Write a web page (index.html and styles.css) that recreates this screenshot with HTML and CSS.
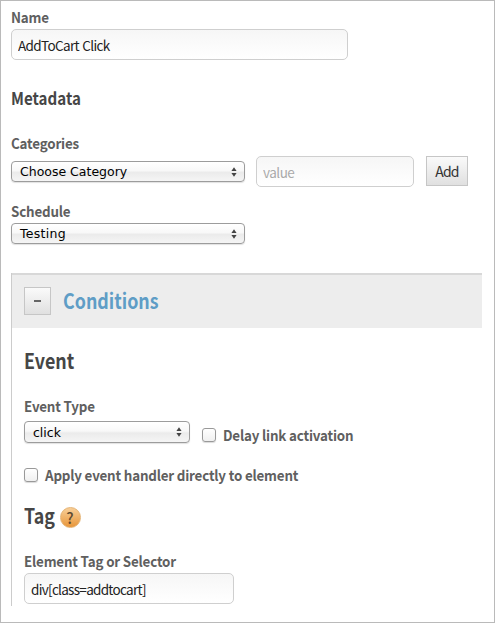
FILE: index.html
```html
<!DOCTYPE html>
<html lang="en">
<head>
<meta charset="utf-8">
<title>AddToCart Click</title>
<link rel="stylesheet" href="styles.css">
</head>
<body>
<form class="page">
  <label class="label name-label" for="name"><span>Name</span></label>
  <input class="text-input name-input" id="name" value="AddToCart Click">
  <h3 class="subheading"><span>Metadata</span></h3>
  <div class="label"><span>Categories</span></div>
  <div class="category-row">
    <div class="select wide"><span>Choose Category</span><svg class="arrows" viewBox="0 0 6 10"><path d="M3 0.2 5.6 4H.4zM3 9.8 5.6 6H.4z"/></svg></div>
    <input class="text-input value-input" placeholder="value">
    <button class="button add" type="button">Add</button>
  </div>
  <div class="label schedule-label"><span>Schedule</span></div>
  <div class="select wide"><span class="testing">Testing</span><svg class="arrows" viewBox="0 0 6 10"><path d="M3 0.2 5.6 4H.4zM3 9.8 5.6 6H.4z"/></svg></div>
  <section class="panel">
    <header class="panel-header">
      <button class="button toggle" type="button" aria-label="Collapse"><i class="minus"></i></button>
      <h2 class="panel-title"><span>Conditions</span></h2>
    </header>
    <div class="panel-body">
      <h2 class="heading"><span>Event</span></h2>
      <div class="label event-type"><span>Event Type</span></div>
      <div class="event-row">
        <div class="select narrow"><span>click</span><svg class="arrows" viewBox="0 0 6 10"><path d="M3 0.2 5.6 4H.4zM3 9.8 5.6 6H.4z"/></svg></div>
        <label class="check delay"><input type="checkbox"><span>Delay link activation</span></label>
      </div>
      <label class="check apply"><input type="checkbox"><span>Apply event handler directly to element</span></label>
      <div class="tag-row">
        <h2 class="heading"><span>Tag</span></h2>
        <span class="help">?</span>
      </div>
      <label class="label selector-label" for="selector"><span>Element Tag or Selector</span></label>
      <input class="text-input selector-input" id="selector" value="div[class=addtocart]">
    </div>
  </section>
</form>
</body>
</html>
```

FILE: styles.css
```css
* { box-sizing: border-box; }
body { margin: 0; background: #fff; }
.page {
  width: 495px;
  height: 623px;
  border: 1px solid #bababa;
  padding: 5px 12px 0 10px;
  font-family: "Noto Sans CJK SC", "Noto Sans", sans-serif;
  color: #606060;
}
h2, h3 { margin: 0; font-weight: 700; color: #464646; }
.label, .check {
  display: block;
  height: 20px;
  font-size: 14.5px;
  line-height: 20px;
  font-weight: 700;
  white-space: nowrap;
  letter-spacing: -0.2px;
}
.label span, .check span {
  display: inline-block;
  transform: translateY(.5px) scaleX(.922);
  transform-origin: left;
}
.check span { transform: translateY(-.5px) scaleX(.922); }
.text-input {
  display: block;
  height: 31px;
  margin: 0;
  padding: 0 6px;
  border: 1px solid #cfcfcf;
  border-radius: 5px;
  background: linear-gradient(#f6f6f6, #fff);
  font: 13.5px "Noto Sans CJK SC", "Noto Sans", sans-serif;
  letter-spacing: -0.65px;
  word-spacing: 1px;
  color: #222;
  outline: 0;
}
.text-input::placeholder { color: #aaa; opacity: 1; }
.name-input { width: 337px; margin-top: 3px; }
.subheading { height: 24px; margin: 26px 0 22px; font-size: 17px; line-height: 24px; }
.subheading span { display: inline-block; transform: scaleX(.89); transform-origin: left; }
.category-row { display: flex; align-items: flex-start; height: 31px; margin-top: 4px; }
.category-row .select { margin-top: 5px; }
.value-input { width: 158px; margin-left: 11px; letter-spacing: -0.5px; }
.select {
  display: flex;
  align-items: center;
  justify-content: space-between;
  height: 21px;
  padding: 0 7px 0 8px;
  border: 1px solid #9c9c9c;
  border-radius: 4px;
  background: linear-gradient(#fff 0, #f8f8f8 45%, #ebebeb 55%, #f5f5f5 100%);
  box-shadow: 0 1px 1px rgba(0, 0, 0, .12);
  font: 12.5px/19px "DejaVu Sans", sans-serif;
  color: #000;
}
.testing { letter-spacing: 0.3px; }
.wide { width: 234px; }
.narrow { width: 166px; }
.arrows { width: 6px; height: 10px; fill: #444; }
.button {
  padding: 0;
  border: 1px solid #c6c6c6;
  background: linear-gradient(#fafafa, #e0e0e0);
  font: 14px "Noto Sans CJK SC", "Noto Sans", sans-serif;
  letter-spacing: -0.8px;
  color: #333;
}
.add { width: 42px; height: 30px; margin-left: 12px; padding-bottom: 1px; }
.schedule-label { margin: 13px 0 3px; }
.panel { width: 471px; height: 333px; margin-top: 29px; border-left: 1px solid #ccc; }
.panel-header {
  display: flex;
  align-items: center;
  height: 55px;
  padding: 0 12px;
  border-top: 2px solid #d8d8d8;
  background: #ededed;
}
.toggle { display: grid; place-items: center; width: 27px; height: 28px; margin-top: -2px; }
.minus { width: 7px; height: 2px; background: #666; }
.panel-title { margin: -3px 0 0 12px; font-size: 21px; line-height: 28px; color: #5f9dc6; }
.panel-title span, .heading span {
  display: inline-block;
  transform: scaleX(.85);
  transform-origin: left;
}
.panel-body { padding: 18px 0 0 12px; }
.heading { height: 28px; font-size: 21px; line-height: 28px; }
.event-type { margin-top: 21px; }
.event-row { display: flex; height: 23px; margin-top: 6px; }
.event-row .select { height: 22px; }
.check { display: flex; align-items: center; }
.check input {
  appearance: none;
  width: 14px;
  height: 14px;
  margin: 0 7px 0 0;
  border: 1px solid #999;
  border-radius: 3px;
  background: linear-gradient(#fff, #f0f0f0);
  box-shadow: 0 1px 1px rgba(0, 0, 0, .15);
}
.delay { margin: 4px 0 0 12px; }
.apply { margin-top: 21px; }
.tag-row { display: flex; height: 28px; margin-top: 16px; }
.help {
  width: 21px;
  height: 21px;
  margin: 6px 0 0 -1px;
  border: 1px solid #e5b272;
  border-radius: 50%;
  background: linear-gradient(#f8cf98, #e8963a);
  font-size: 15px;
  line-height: 19px;
  font-weight: 500;
  text-align: center;
  color: #5d4a30;
}
.selector-label { margin-top: 21px; }
.selector-input { width: 210px; margin-top: 3px; letter-spacing: -0.7px; }
```
